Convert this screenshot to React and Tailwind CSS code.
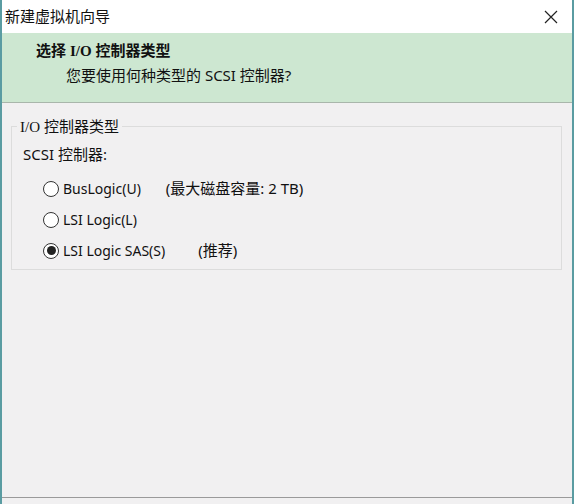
const font = { fontFamily: '"Noto Sans", "Noto Sans CJK SC", sans-serif' };

const Radio = ({ checked, label, note, noteClass }) => (
  <div className="flex items-center h-[31px]">
    <span className="w-[16px] h-[16px] rounded-full border border-[#333] bg-white flex items-center justify-center ml-[31px]">
      {checked && <span className="w-[9px] h-[9px] rounded-full bg-[#222]" />}
    </span>
    <span className="ml-[4px] text-[14px] text-[#111]">{label}</span>
    {note && <span className={`text-[15px] text-[#111] ${noteClass}`}>{note}</span>}
  </div>
);

export default function App() {
  return (
    <div
      className="w-[574px] h-[504px] bg-[#f1f0f1] border-x-2 border-[#5a9ca2] flex flex-col overflow-hidden"
      style={font}
    >
      <div className="h-[33px] bg-white flex items-center justify-between pl-[3px] pr-[14px] shrink-0">
        <span className="text-[15px] text-[#111]">新建虚拟机向导</span>
        <svg width="14" height="14" viewBox="0 0 14 14">
          <path d="M1 1L13 13M13 1L1 13" stroke="#222" strokeWidth="1.2" />
        </svg>
      </div>
      <div className="h-[70px] bg-[#cde7d1] border-b border-[#a9b6ab] shrink-0 pt-[7px]">
        <div className="pl-[34px] text-[15px] font-bold text-[#111] leading-[20px]">
          选择 <span style={{ fontFamily: '"Liberation Serif", serif' }}>I/O</span> 控制器类型
        </div>
        <div className="pl-[64px] text-[15px] text-[#111] leading-[20px] mt-[4px]">
          您要使用何种类型的 SCSI 控制器?
        </div>
      </div>
      <div className="px-[9px] pt-[23px]">
        <div className="relative border border-[#dcdcdc] h-[144px] w-[551px]">
          <span className="absolute -top-[11px] left-[5px] px-[3px] bg-[#f1f0f1] text-[15px] text-[#111] leading-[20px]">
            <span style={{ fontFamily: '"Liberation Serif", serif' }}>I/O</span> 控制器类型
          </span>
          <div className="pl-[11px] pt-[17px] text-[15px] text-[#111] leading-[20px]">SCSI 控制器:</div>
          <div className="mt-[9px]">
            <Radio label="BusLogic(U)" note="(最大磁盘容量: 2 TB)" noteClass="ml-[25px]" />
            <Radio label="LSI Logic(L)" />
            <Radio checked label="LSI Logic SAS(S)" note="(推荐)" noteClass="ml-[33px]" />
          </div>
        </div>
      </div>
      <div className="flex-1" />
      <div className="h-[7px] border-t border-[#9a9a9a] shrink-0" />
    </div>
  );
}
